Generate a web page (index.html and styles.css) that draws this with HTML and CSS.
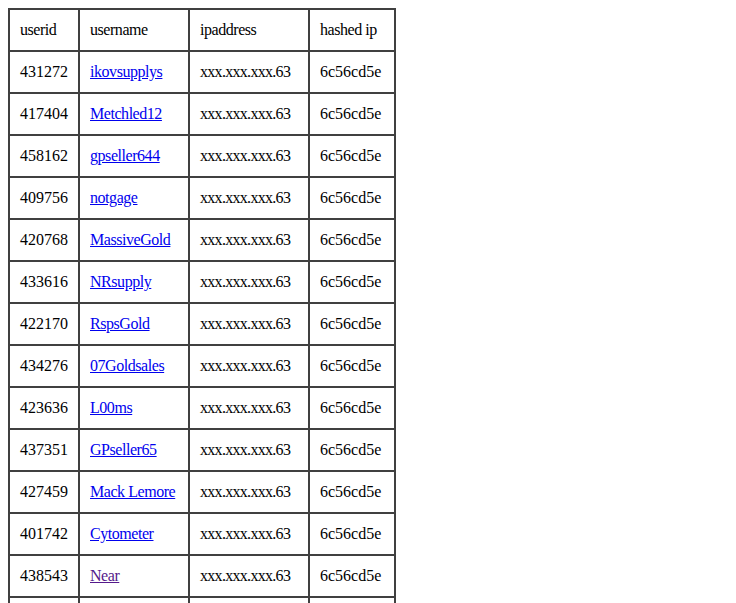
FILE: index.html
```html
<!DOCTYPE html>
<html>
<head>
<meta charset="utf-8">
<link rel="stylesheet" href="styles.css">
</head>
<body>
<table class="ip-table">
  <tr class="head"><td class="c-id">userid</td><td class="c-name">username</td><td class="c-ip">ipaddress</td><td class="c-hash">hashed ip</td></tr>
  <tr><td>431272</td><td class="name"><a href="#">ikovsupplys</a></td><td class="ip">xxx.xxx.xxx.63</td><td>6c56cd5e</td></tr>
  <tr><td>417404</td><td class="name"><a href="#">Metchled12</a></td><td class="ip">xxx.xxx.xxx.63</td><td>6c56cd5e</td></tr>
  <tr><td>458162</td><td class="name"><a href="#">gpseller644</a></td><td class="ip">xxx.xxx.xxx.63</td><td>6c56cd5e</td></tr>
  <tr><td>409756</td><td class="name"><a href="#">notgage</a></td><td class="ip">xxx.xxx.xxx.63</td><td>6c56cd5e</td></tr>
  <tr><td>420768</td><td class="name"><a href="#">MassiveGold</a></td><td class="ip">xxx.xxx.xxx.63</td><td>6c56cd5e</td></tr>
  <tr><td>433616</td><td class="name"><a href="#">NRsupply</a></td><td class="ip">xxx.xxx.xxx.63</td><td>6c56cd5e</td></tr>
  <tr><td>422170</td><td class="name"><a href="#">RspsGold</a></td><td class="ip">xxx.xxx.xxx.63</td><td>6c56cd5e</td></tr>
  <tr><td>434276</td><td class="name"><a href="#">07Goldsales</a></td><td class="ip">xxx.xxx.xxx.63</td><td>6c56cd5e</td></tr>
  <tr><td>423636</td><td class="name"><a href="#">L00ms</a></td><td class="ip">xxx.xxx.xxx.63</td><td>6c56cd5e</td></tr>
  <tr><td>437351</td><td class="name"><a href="#">GPseller65</a></td><td class="ip">xxx.xxx.xxx.63</td><td>6c56cd5e</td></tr>
  <tr><td>427459</td><td class="name"><a href="#">Mack Lemore</a></td><td class="ip">xxx.xxx.xxx.63</td><td>6c56cd5e</td></tr>
  <tr><td>401742</td><td class="name"><a href="#">Cytometer</a></td><td class="ip">xxx.xxx.xxx.63</td><td>6c56cd5e</td></tr>
  <tr><td>438543</td><td class="name"><a href="#" class="visited">Near</a></td><td class="ip">xxx.xxx.xxx.63</td><td>6c56cd5e</td></tr>
  <tr><td>412208</td><td class="name"><a href="#">Goldlord</a></td><td class="ip">xxx.xxx.xxx.63</td><td>6c56cd5e</td></tr>
  <tr><td>445190</td><td class="name"><a href="#">RsBuyer</a></td><td class="ip">xxx.xxx.xxx.63</td><td>6c56cd5e</td></tr>
</table>
</body>
</html>
```
FILE: styles.css
```css
html, body {
  background: #ffffff;
}
body {
  margin: 8px;
  font-family: "Liberation Serif", "Times New Roman", serif;
  font-size: 16px;
  color: #000000;
}
.ip-table {
  border: 1px solid #404040;
  border-spacing: 0;
  border-collapse: separate;
  table-layout: fixed;
  width: 388px;
}
.ip-table td {
  border: 1px solid #404040;
  padding: 10px;
  line-height: 20px;
  white-space: nowrap;
  text-align: left;
}
.ip-table .c-id { width: 48px; }
.ip-table .c-name { width: 88px; }
.ip-table .c-ip { width: 98px; }
.ip-table .c-hash { width: 64px; }
.ip-table .head td { letter-spacing: -0.45px; }
.ip-table .name { letter-spacing: -0.45px; }
.ip-table .ip { letter-spacing: -0.7px; }
.ip-table a {
  color: #0000ee;
  text-decoration: underline;
}
.ip-table a.visited {
  color: #551a8b;
}
```
